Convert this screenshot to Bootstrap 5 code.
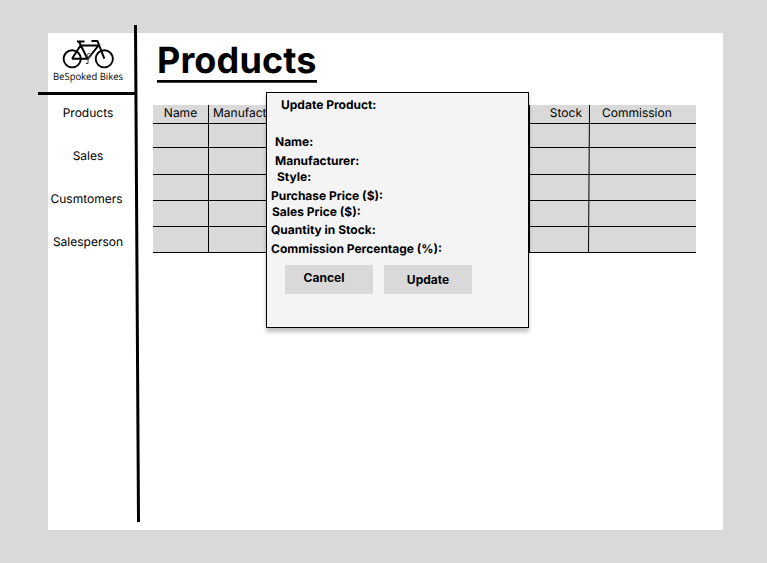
<!DOCTYPE html>
<html lang="en">
<head>
<meta charset="utf-8">
<title>BeSpoked Bikes - Products</title>
<link href="https://cdn.jsdelivr.net/npm/bootstrap@5.3.0/dist/css/bootstrap.min.css" rel="stylesheet">
<style>
body{background:#d9d9d9;font-family:Inter,sans-serif;font-size:12px;line-height:16px;color:#000;height:563px;overflow:hidden;padding:33px 44px 33px 48px;text-rendering:geometricPrecision}
.frame{width:675px;height:497px;background:#fff}
.side{width:105px;flex:none}
.brand{height:72px;padding-top:5px}
.brand svg{display:block;margin-left:4px}
.side .nav-link{color:#000;padding:0;width:80px;text-align:center;line-height:16px;margin-bottom:27px;white-space:nowrap}
.side .cust{width:77px}
.title{font-size:36px;line-height:40px;font-weight:700;letter-spacing:.13px;margin:7px 0 0 4px;width:160px;white-space:nowrap}
.title-rule{height:3px;width:160px;margin-left:4px;background:linear-gradient(#000 2px,#444 2px)}
.grid-table{width:543px;margin-top:22px;background:#d9d9d9;table-layout:fixed;border-collapse:separate;border-spacing:0}
.grid-table th,.grid-table td{padding:0;border-bottom:1px solid #000;height:26px;font-weight:400;white-space:nowrap}
.grid-table th{height:19px;line-height:16px;vertical-align:top}
.grid-table .first td{height:24px}
.grid-table .second td{height:27px}
.grid-table .ln{border-right:1px solid #000}
.w-name{width:56px}.w-maker{width:321px}.w-stock{width:60px}.w-comm{width:106px}
.rule{left:38px;top:25px;pointer-events:none}
.dialog-box{left:266px;top:92px;width:263px;height:236px;background:#f4f4f4;border:1px solid #000;box-shadow:0 4px 4px rgba(0,0,0,.25);font-weight:700;padding:4px 0 0 4px;white-space:nowrap}
.dlg-title{padding-left:10px;margin-bottom:21px}
.in-4{padding-left:4px}.in-6{padding-left:6px}.in-1{padding-left:1px}
.gap-b3{margin-bottom:3px}.gap-b2{margin-bottom:2px}
.actions{gap:11px;padding-left:14px}
.dialog-box .btn{width:88px;height:29px;background:#d9d9d9;border:0;border-radius:0;font-size:12px;font-weight:700;line-height:16px;color:#000;padding:0}
.dialog-box .btn-cancel{padding:0 10px 4px 0}
</style>
<script src="https://cdn.jsdelivr.net/npm/bootstrap@5.3.0/dist/js/bootstrap.bundle.min.js"></script>
</head>
<body>
<div class="frame d-flex">
  <aside class="side">
    <div class="brand">
      <svg width="76" height="46" viewBox="52 38 76 46" fill="none" stroke="#000">
        <circle cx="72.2" cy="58.8" r="8.6" stroke-width="1.9"/>
        <circle cx="104.3" cy="58.8" r="8.6" stroke-width="1.9"/>
        <path d="M72 58.7H88L98.500 45.500H80.500L72 58.700M79 41.800L87.500 58.700M77 41.500H84.500M91.500 41H97.500L104.300 58.700" stroke-width="2" stroke-linejoin="round"/>
        <circle cx="89" cy="55.500" r="2" stroke="#555" stroke-width="1"/>
        <path d="M88 58V63.500H85.800" stroke="#333" stroke-width="1"/>
        <text x="53" y="80" textLength="70" lengthAdjust="spacingAndGlyphs" font-family="Open Sans, sans-serif" font-size="10" fill="#000" stroke="none">BeSpoked Bikes</text>
      </svg>
    </div>
    <nav class="nav flex-column">
      <a class="nav-link" href="#">Products</a>
      <a class="nav-link" href="#">Sales</a>
      <a class="nav-link cust" href="#">Cusmtomers</a>
      <a class="nav-link" href="#">Salesperson</a>
    </nav>
  </aside>
  <main>
    <h1 class="title">Products</h1>
    <div class="title-rule"></div>
    <table class="grid-table">
      <colgroup><col class="w-name"><col class="w-maker"><col class="w-stock"><col class="w-comm"></colgroup>
      <thead><tr><th class="ln text-center">Name</th><th class="ln ps-1">Manufacturer</th><th class="text-end pe-2">Stock</th><th class="ps-2"><span class="ms-1">Commission</span></th></tr></thead>
      <tbody>
        <tr class="first"><td class="ln"></td><td class="ln"></td><td></td><td></td></tr>
        <tr class="second"><td class="ln"></td><td class="ln"></td><td></td><td></td></tr>
        <tr><td class="ln"></td><td class="ln"></td><td></td><td></td></tr>
        <tr><td class="ln"></td><td class="ln"></td><td></td><td></td></tr>
        <tr><td class="ln"></td><td class="ln"></td><td></td><td></td></tr>
      </tbody>
    </table>
  </main>
</div>
<svg class="rule position-absolute" width="570" height="500" viewBox="38 25 570 500" stroke="#000" stroke-width="3">
  <path d="M135.500 25L138.500 522M38 93.500H136"/>
  <path d="M589.500 105L588.500 252" stroke-width="1"/>
</svg>
<div class="dialog-box position-absolute">
  <div class="dlg-title">Update Product:</div>
  <div class="in-4 gap-b3">Name:</div>
  <div class="in-4">Manufacturer:</div>
  <div class="in-6 gap-b3">Style:</div>
  <div>Purchase Price ($):</div>
  <div class="in-1 gap-b2">Sales Price ($):</div>
  <div class="gap-b3">Quantity in Stock:</div>
  <div>Commission Percentage (%):</div>
  <div class="actions d-flex mt-2">
    <button class="btn btn-cancel" type="button">Cancel</button>
    <button class="btn" type="button">Update</button>
  </div>
</div>
</body>
</html>
